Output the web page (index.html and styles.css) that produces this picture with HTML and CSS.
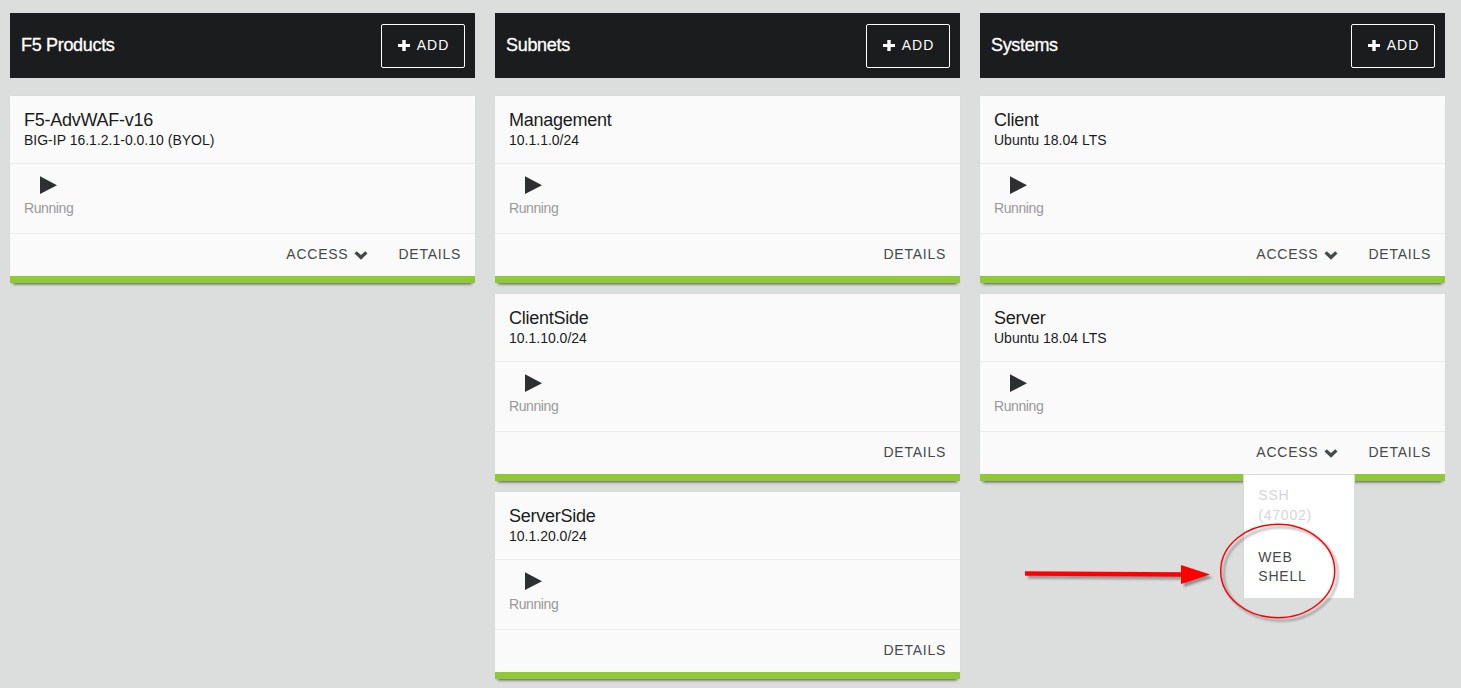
FILE: index.html
```html
<!DOCTYPE html>
<html lang="en">
<head>
<meta charset="utf-8">
<title>Deployment</title>
<link rel="stylesheet" href="styles.css">
<script src="app.js" defer></script>
</head>
<body>
<svg class="defs" width="0" height="0" aria-hidden="true">
  <symbol id="plus" viewBox="0 0 12 11"><path d="M4.3 0h3.4v3.9H12v3.2H7.7V11H4.3V7.1H0V3.9h4.3z"/></symbol>
  <symbol id="play" viewBox="0 0 17 18"><path d="M0 0.3L17 9.3L0 18z"/></symbol>
  <symbol id="chevron" viewBox="0 0 14 9"><path d="M0.5 2.5L2.7 0.3L7 4.1L11.3 0.3L13.5 2.5L7 8.8z"/></symbol>
</svg>
<main class="board"></main>
<svg class="annotation" width="1461" height="688" aria-hidden="true">
  <g class="annotation-shadow" transform="translate(3 3)">
    <ellipse cx="1277.7" cy="571" rx="57" ry="46.7"/>
    <path class="shadow-line" d="M1025 573.5L1184 574.5"/>
    <path class="shadow-head" d="M1181 565L1210 574.5L1181 584z"/>
  </g>
  <g class="annotation-mark">
    <ellipse cx="1277.7" cy="571" rx="57" ry="46.7"/>
    <path class="arrow-line" d="M1025 573.5L1184 574.5"/>
    <path class="arrow-head" d="M1181 565L1210 574.5L1181 584z"/>
  </g>
</svg>
</body>
</html>
```

FILE: app.js
```js
const columns = [
  { title: 'F5 Products', cards: [
    { name: 'F5-AdvWAF-v16', info: 'BIG-IP 16.1.2.1-0.0.10 (BYOL)', access: true }
  ] },
  { title: 'Subnets', cards: [
    { name: 'Management', info: '10.1.1.0/24' },
    { name: 'ClientSide', info: '10.1.10.0/24' },
    { name: 'ServerSide', info: '10.1.20.0/24' }
  ] },
  { title: 'Systems', cards: [
    { name: 'Client', info: 'Ubuntu 18.04 LTS', access: true },
    { name: 'Server', info: 'Ubuntu 18.04 LTS', access: true, open: true }
  ] }
];

const icon = name => `<svg class="icon-${name}"><use href="#${name}"/></svg>`;

const menu = `<div class="menu"><a class="menu-item disabled">SSH<br>(47002)</a><a class="menu-item">WEB<br>SHELL</a></div>`;

const card = c => `<article class="card">
  <header class="card-head"><h2 class="card-name">${c.name}</h2><p class="card-info">${c.info}</p></header>
  <div class="card-body"><div class="status">${icon('play')}<span>Running</span></div></div>
  <footer class="card-foot">${c.access ? `<div class="action">ACCESS${icon('chevron')}${c.open ? menu : ''}</div>` : ''}<div class="action">DETAILS</div></footer>
</article>`;

document.querySelector('.board').innerHTML = columns.map(col => `<section class="column">
  <div class="column-head"><h1 class="column-title">${col.title}</h1><button class="add">${icon('plus')}ADD</button></div>
  ${col.cards.map(card).join('')}
</section>`).join('');
```

FILE: styles.css
```css
* { box-sizing: border-box; }
body { margin: 0; height: 688px; overflow: hidden; background: #dcdedd; color: #1b1c1e; font-family: "Liberation Sans", Arial, sans-serif; }
h1, h2, p { margin: 0; font-weight: 400; }
.defs { position: absolute; }
.board { display: grid; grid-template-columns: repeat(3, 465px); gap: 20px; padding: 13px 10px 0; }
.column-head { display: flex; align-items: center; justify-content: space-between; height: 65px; margin-bottom: 18px; padding: 0 10px 0 11px; background: #1b1c1e; color: #fff; }
.column-title { padding-bottom: 2px; font-size: 18px; line-height: 24px; letter-spacing: -0.32px; -webkit-text-stroke: 0.3px #fff; }
.add { display: flex; align-items: center; justify-content: center; gap: 7px; width: 84px; height: 44px; padding: 0 0 2px 1px; border: 1px solid #fff; border-radius: 2px; background: none; color: #fff; font: 14px "Liberation Sans", Arial, sans-serif; letter-spacing: 1px; }
.icon-plus { width: 12px; height: 11px; margin-top: 1px; fill: #fff; }
.card { height: 187px; margin-bottom: 11px; border-bottom: 7px solid #8fc937; background: #fafafa; box-shadow: 0 4px 3px -3px rgba(0, 0, 0, 0.65), 0 0 2px rgba(0, 0, 0, 0.03); }
.card-head { height: 68px; padding: 13px 14px 0; border-bottom: 1px solid #ebeceb; }
.card-name { font-size: 18px; line-height: 22px; letter-spacing: -0.25px; }
.card-info { font-size: 14px; line-height: 18px; }
.card-body { height: 70px; padding: 12px 14px 0; border-bottom: 1px solid #ebeceb; }
.status { display: flex; flex-direction: column; align-items: flex-start; width: 49px; color: #999; font-size: 14px; line-height: 16px; letter-spacing: -0.4px; }
.icon-play { width: 17px; height: 18px; margin: 0 0 6px 16px; fill: #2e2f31; }
.card-foot { display: flex; justify-content: flex-end; align-items: center; gap: 30px; height: 42px; padding: 0 14px 2px 0; }
.action { position: relative; display: flex; align-items: center; color: #46494b; font-size: 14px; line-height: 20px; letter-spacing: 0.75px; }
.icon-chevron { width: 14px; height: 9px; margin: 3px 0 0 6px; fill: #46494b; }
.menu { position: absolute; z-index: 1; top: 32px; left: -13px; width: 112px; height: 124px; padding: 10px 14px; border: 1px solid #d8dad9; border-bottom: 0; background: #fff; }
.menu-item { display: block; margin-bottom: 23px; line-height: 19px; letter-spacing: 0.75px; }
.menu-item.disabled { color: #d5d6d7; line-height: 20px; }
.annotation { position: absolute; z-index: 2; top: 0; left: 0; pointer-events: none; }
.annotation-mark { fill: none; stroke: #ff0000; stroke-width: 1.5; }
.annotation-shadow { fill: none; stroke: rgba(0, 0, 0, 0.3); stroke-width: 2; filter: blur(1.3px); }
.arrow-line, .shadow-line { stroke-width: 4.5; }
.arrow-head { fill: #ff0000; stroke: none; }
.shadow-head { fill: rgba(0, 0, 0, 0.35); stroke: none; }
```
